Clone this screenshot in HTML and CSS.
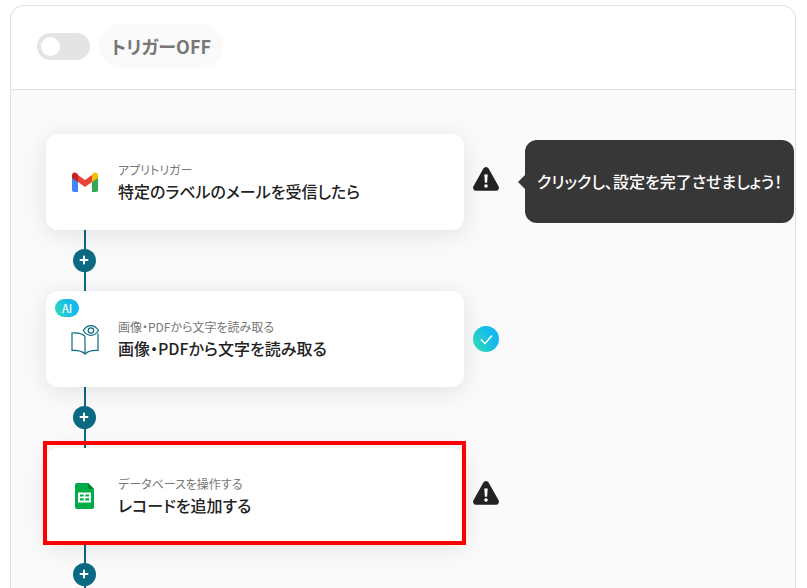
FILE: index.html
```html
<!DOCTYPE html>
<html lang="ja">
  <head>
    <meta charset="UTF-8" />
    <meta name="viewport" content="width=device-width, initial-scale=1.0" />
    <title>フロー</title>
    <link rel="stylesheet" href="styles.css">
  </head>
  <body>
    <main class="panel">
      <header class="panel-header">
        <input type="checkbox" id="trigger" class="toggle" />
        <label for="trigger" class="toggle-label">トリガーOFF</label>
      </header>

      <div class="canvas">
        <div class="step">
          <section class="card">
            <svg class="card-icon" viewBox="0 0 28 28">
              <path fill="#4285f4" d="M1 8l6 4v12H3a2 2 0 0 1-2-2z" />
              <path fill="#34a853" d="M21 12l6-4v14a2 2 0 0 1-2 2h-4z" />
              <path fill="#ea4335" d="M7 7l7 5 7-5v7l-7 5-7-5z" />
              <path fill="#c5221f" d="M1 7.500C1 4.500 4 3.500 6 5.500L7 6.500V14L1 10z" />
              <path fill="#fbbc04" d="M27 7.500C27 4.500 24 3.500 22 5.500L21 6.500V14l6-4z" />
            </svg>
            <div class="card-text">
              <p class="card-kind">アプリトリガー</p>
              <h2 class="card-title">特定のラベルのメールを受信したら</h2>
            </div>
          </section>
          <div class="status">
            <svg class="warning" viewBox="0 0 26 24">
              <path fill="#222" d="M10.400 1.600a3 3 0 0 1 5.200 0l9.800 17.500a3 3 0 0 1-2.600 4.700H3.200a3 3 0 0 1-2.600-4.700z" />
              <path fill="#fff" d="M11.300 7.500h3.400l-.6 8.300h-2.200z" />
              <circle cx="13" cy="19" r="1.800" fill="#fff" />
            </svg>
            <div class="tooltip">クリックし、設定を完了させましょう！</div>
          </div>
        </div>

        <div class="connector">
          <button class="add" aria-label="追加">
            <svg viewBox="0 0 11 11"><path d="M5 1.500v7M1.500 5h7" /></svg>
          </button>
        </div>

        <div class="step">
          <section class="card">
            <span class="badge">AI</span>
            <svg class="card-icon book" viewBox="0 0 28 32">
              <path d="M14 13.500C11.500 10.700 7 9.500 1 10v17.500c5-.3 10 .5 13 3.500 3-3 8-3.800 13-3.500V10.500" />
              <path d="M14 13.500V31" />
              <path d="M12.300 7.500c4-6.500 11.200-6.500 15.200 0-4 6.500-11.200 6.500-15.200 0z" />
              <circle cx="19.900" cy="7.500" r="2.700" />
            </svg>
            <div class="card-text">
              <p class="card-kind">画像・PDFから文字を読み取る</p>
              <h2 class="card-title">画像・PDFから文字を読み取る</h2>
            </div>
          </section>
          <div class="status">
            <svg class="done" viewBox="0 0 26 26">
              <defs>
                <linearGradient id="doneFill" x1="0" y1="0.800" x2="1" y2="0.200">
                  <stop offset="0" stop-color="#2edcb5" />
                  <stop offset="0.700" stop-color="#14b9ee" />
                </linearGradient>
              </defs>
              <circle cx="13" cy="13" r="13" fill="url(#doneFill)" />
              <path d="M7.800 13.500l4.200 4 7-8" fill="none" stroke="#fff" stroke-width="1.500" />
            </svg>
          </div>
        </div>

        <div class="connector">
          <button class="add" aria-label="追加">
            <svg viewBox="0 0 11 11"><path d="M5 1.500v7M1.500 5h7" /></svg>
          </button>
        </div>

        <div class="step">
          <section class="card selected">
            <svg class="card-icon" viewBox="0 0 28 28">
              <path fill="#00ac47" d="M6 1h11l6 6v18a2 2 0 0 1-2 2H6a2 2 0 0 1-2-2V3a2 2 0 0 1 2-2z" />
              <path fill="#00832d" d="M17 1l6 6h-4a2 2 0 0 1-2-2z" />
              <path fill="#fff" fill-rule="evenodd" d="M7 10.500h13v10H7zM9 12.500v2h3.700v-2zm5.300 0v2H18v-2zM9 16.300v2.200h3.700v-2.200zm5.300 0v2.200H18v-2.200z" />
            </svg>
            <div class="card-text">
              <p class="card-kind">データベースを操作する</p>
              <h2 class="card-title">レコードを追加する</h2>
            </div>
          </section>
          <div class="status">
            <svg class="warning" viewBox="0 0 26 24">
              <path fill="#222" d="M10.400 1.600a3 3 0 0 1 5.200 0l9.800 17.500a3 3 0 0 1-2.600 4.700H3.200a3 3 0 0 1-2.600-4.700z" />
              <path fill="#fff" d="M11.300 7.500h3.400l-.6 8.300h-2.200z" />
              <circle cx="13" cy="19" r="1.800" fill="#fff" />
            </svg>
          </div>
        </div>

        <div class="connector">
          <button class="add" aria-label="追加">
            <svg viewBox="0 0 11 11"><path d="M5 1.500v7M1.500 5h7" /></svg>
          </button>
        </div>
      </div>
    </main>
  </body>
</html>
```
FILE: styles.css
```css
* {
  box-sizing: border-box;
}

body {
  margin: 0;
  padding: 5px 11px 0 10px;
  background-color: #fff;
  color: #222;
  font-family: "Noto Sans CJK JP", sans-serif;
  font-feature-settings: "palt";
}

.panel {
  display: flex;
  flex-direction: column;
  height: calc(100vh - 5px);
  overflow: hidden;
  border: 1px solid #e2e2e2;
  border-bottom: none;
  border-radius: 14px 14px 0 0;
}

.panel-header {
  display: flex;
  align-items: center;
  gap: 9px;
  padding: 18px 26px 21px;
  border-bottom: 1px solid #e2e2e2;
}

.toggle {
  appearance: none;
  width: 53px;
  height: 27px;
  margin: 0;
  padding: 4px;
  border-radius: 14px;
  background-color: #e4e4e4;
  cursor: pointer;
}

.toggle::before {
  content: "";
  display: block;
  width: 19px;
  height: 19px;
  border-radius: 50%;
  background-color: #fff;
}

.toggle:checked::before {
  margin-left: auto;
}

.toggle-label {
  padding: 0 12px;
  border-radius: 22px;
  background-color: #fafafa;
  color: #777;
  font-size: 18px;
  font-weight: 700;
  line-height: 44px;
}

.canvas {
  flex: 1;
  min-height: 0;
  padding: 44px 0 0 35px;
  background-color: #fafafa;
}

.step {
  display: flex;
  align-items: center;
  gap: 9px;
}

.card {
  position: relative;
  display: flex;
  align-items: center;
  gap: 19px;
  flex: 0 1 418px;
  height: 96px;
  padding: 0 25px;
  border-radius: 12px;
  background-color: #fff;
  box-shadow: 0 4px 24px rgba(0, 0, 0, 0.1);
}

.selected::after {
  content: "";
  position: absolute;
  inset: -7px -2px -1px -3px;
  border: 4px solid #f00;
}

.card-icon {
  width: 28px;
  flex: none;
}

.book {
  fill: none;
  stroke: #0b6a82;
  stroke-width: 1.2;
}

.card-kind {
  margin: 0;
  color: #777;
  font-size: 12px;
  line-height: 18px;
}

.card-title {
  margin: 0;
  font-size: 16px;
  font-weight: 500;
  line-height: 24px;
}

.badge {
  position: absolute;
  top: 8px;
  left: 9px;
  width: 24px;
  border-radius: 9px;
  background: linear-gradient(70deg, #2edcb5, #14b9ee 70%);
  color: #fff;
  font-size: 11px;
  font-weight: 500;
  line-height: 18px;
  text-align: center;
}

.status {
  position: relative;
  display: flex;
  flex: none;
  width: 26px;
}

.warning {
  width: 26px;
  height: 24px;
  margin-bottom: 6px;
}

.done {
  width: 26px;
  height: 26px;
}

.tooltip {
  position: absolute;
  top: -27px;
  left: 52px;
  padding: 0 12px;
  border-radius: 12px;
  background-color: #373737;
  color: #fff;
  font-size: 16px;
  font-weight: 500;
  line-height: 83px;
  white-space: nowrap;
}

.tooltip::before {
  content: "";
  position: absolute;
  top: 35px;
  left: -7px;
  border: solid transparent;
  border-width: 7px 7px 7px 0;
  border-right-color: #373737;
}

.connector {
  display: flex;
  align-items: center;
  justify-content: center;
  width: 23px;
  height: 61px;
  margin-left: 27px;
  background: linear-gradient(#0b6a82, #0b6a82) center / 2px 100% no-repeat;
}

.add {
  display: flex;
  align-items: center;
  justify-content: center;
  width: 23px;
  height: 23px;
  padding: 0;
  border: none;
  border-radius: 50%;
  background-color: #0b6a82;
  cursor: pointer;
}

.add svg {
  width: 11px;
  height: 11px;
  fill: none;
  stroke: #fff;
  stroke-width: 2;
  stroke-linecap: round;
}
```
